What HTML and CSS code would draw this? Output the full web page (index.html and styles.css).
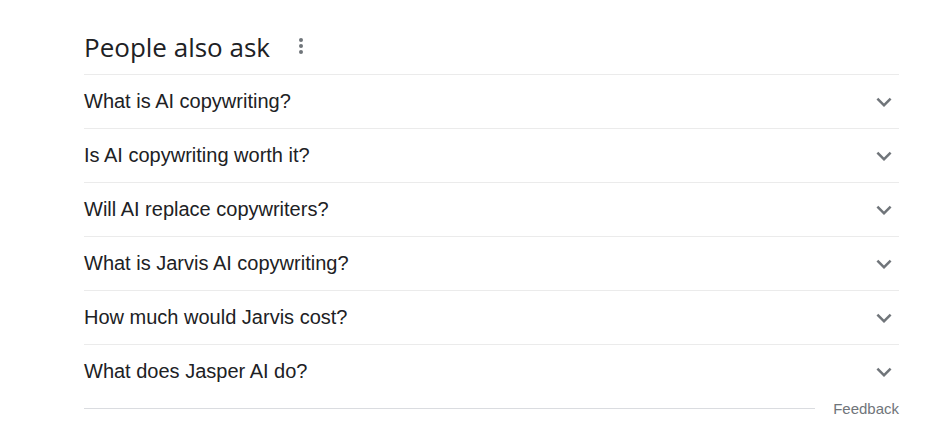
FILE: index.html
```html
<!DOCTYPE html>
<html lang="en">
<head>
    <meta charset="UTF-8">
    <meta name="viewport" content="width=device-width, initial-scale=1.0">
    <title>People also ask</title>
    <link rel="stylesheet" href="styles.css">
</head>
<body>
    <div class="paa">
        <div class="paa-head">
            <h2 class="paa-title">People also ask</h2>
            <span class="paa-menu"><i></i><i></i><i></i></span>
        </div>

        <div class="paa-row">
            <span class="paa-q">What is AI copywriting?</span>
            <svg class="chev" viewBox="0 0 24 24"><path d="M16.59 8.59L12 13.17 7.41 8.59 6 10l6 6 6-6z"/></svg>
        </div>
        <div class="paa-row">
            <span class="paa-q">Is AI copywriting worth it?</span>
            <svg class="chev" viewBox="0 0 24 24"><path d="M16.59 8.59L12 13.17 7.41 8.59 6 10l6 6 6-6z"/></svg>
        </div>
        <div class="paa-row">
            <span class="paa-q">Will AI replace copywriters?</span>
            <svg class="chev" viewBox="0 0 24 24"><path d="M16.59 8.59L12 13.17 7.41 8.59 6 10l6 6 6-6z"/></svg>
        </div>
        <div class="paa-row">
            <span class="paa-q">What is Jarvis AI copywriting?</span>
            <svg class="chev" viewBox="0 0 24 24"><path d="M16.59 8.59L12 13.17 7.41 8.59 6 10l6 6 6-6z"/></svg>
        </div>
        <div class="paa-row">
            <span class="paa-q">How much would Jarvis cost?</span>
            <svg class="chev" viewBox="0 0 24 24"><path d="M16.59 8.59L12 13.17 7.41 8.59 6 10l6 6 6-6z"/></svg>
        </div>
        <div class="paa-row">
            <span class="paa-q">What does Jasper AI do?</span>
            <svg class="chev" viewBox="0 0 24 24"><path d="M16.59 8.59L12 13.17 7.41 8.59 6 10l6 6 6-6z"/></svg>
        </div>

        <div class="paa-foot">
            <span class="foot-line"></span>
            <span class="feedback">Feedback</span>
        </div>
    </div>
</body>
</html>
```

FILE: styles.css
```css
body {
    margin: 0;
    background: #fff;
    font-family: "Liberation Sans", Arial, sans-serif;
    color: #202124;
}
.paa {
    width: 815px;
    margin-left: 84px;
    padding-top: 20px;
}
.paa-head {
    display: flex;
    align-items: center;
    height: 54px;
}
.paa-title {
    margin: 0;
    font-family: "Open Sans", Arial, sans-serif;
    font-size: 26px;
    font-weight: 400;
    color: #202124;
}
.paa-menu {
    display: flex;
    flex-direction: column;
    gap: 2px;
    margin-left: 29px;
    margin-top: -2px;
}
.paa-menu i {
    display: block;
    width: 4px;
    height: 4px;
    border-radius: 50%;
    background: #70757a;
}
.paa-row {
    display: flex;
    align-items: center;
    justify-content: space-between;
    height: 53px;
    border-top: 1px solid #ebebeb;
}
.paa-q {
    font-size: 20px;
}
.chev {
    width: 30px;
    height: 30px;
    fill: #70757a;
}
.paa-foot {
    display: flex;
    align-items: center;
    height: 20px;
}
.foot-line {
    flex: 1;
    height: 1px;
    background: #dadce0;
}
.feedback {
    margin-left: 18px;
    font-size: 15px;
    color: #70757a;
}
```
